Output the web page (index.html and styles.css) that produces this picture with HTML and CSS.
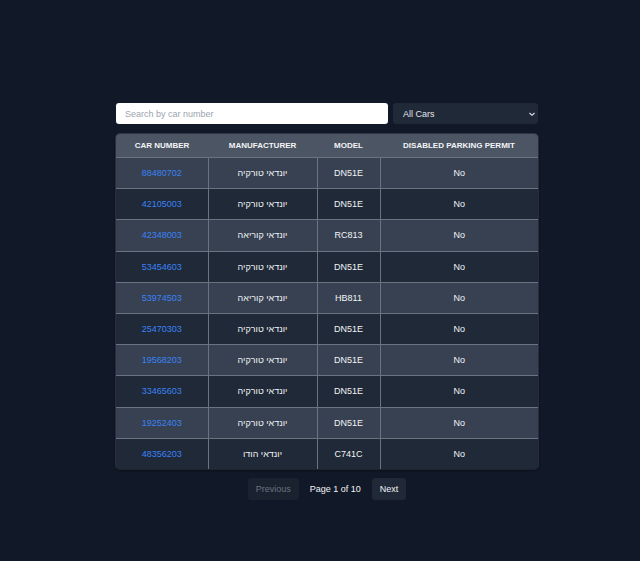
FILE: index.html
```html
<!DOCTYPE html>
<html>
<head>
<meta charset="utf-8">
<link rel="stylesheet" href="styles.css">
</head>
<body>
<div class="page">
  <div class="wrap">
    <div class="controls">
      <input class="search" type="text" placeholder="Search by car number">
      <div class="select"><span>All Cars</span><svg width="8" height="8" viewBox="0 0 8 8"><path d="M1.5 3 L4 5.3 L6.5 3" fill="none" stroke="#e5e7eb" stroke-width="1.1"/></svg></div>
    </div>
    <div class="table-box">
      <table>
        <thead>
          <tr><th class="c1">Car Number</th><th class="c2">Manufacturer</th><th class="c3">Model</th><th class="c4">Disabled Parking Permit</th></tr>
        </thead>
        <tbody>
          <tr><td class="num">88480702</td><td dir="rtl">יונדאי טורקיה</td><td>DN51E</td><td>No</td></tr>
          <tr><td class="num">42105003</td><td dir="rtl">יונדאי טורקיה</td><td>DN51E</td><td>No</td></tr>
          <tr><td class="num">42348003</td><td dir="rtl">יונדאי קוריאה</td><td>RC813</td><td>No</td></tr>
          <tr><td class="num">53454603</td><td dir="rtl">יונדאי טורקיה</td><td>DN51E</td><td>No</td></tr>
          <tr><td class="num">53974503</td><td dir="rtl">יונדאי קוריאה</td><td>HB811</td><td>No</td></tr>
          <tr><td class="num">25470303</td><td dir="rtl">יונדאי טורקיה</td><td>DN51E</td><td>No</td></tr>
          <tr><td class="num">19568203</td><td dir="rtl">יונדאי טורקיה</td><td>DN51E</td><td>No</td></tr>
          <tr><td class="num">33465603</td><td dir="rtl">יונדאי טורקיה</td><td>DN51E</td><td>No</td></tr>
          <tr><td class="num">19252403</td><td dir="rtl">יונדאי טורקיה</td><td>DN51E</td><td>No</td></tr>
          <tr><td class="num">48356203</td><td dir="rtl">יונדאי הודו</td><td>C741C</td><td>No</td></tr>
        </tbody>
      </table>
    </div>
    <div class="pager">
      <button class="btn disabled">Previous</button>
      <span class="info">Page 1 of 10</span>
      <button class="btn">Next</button>
    </div>
  </div>
</div>
</body>
</html>
```
FILE: styles.css
```css
html, body {
  margin: 0;
  padding: 0;
  background: #111827;
  font-family: "Liberation Sans", Arial, sans-serif;
}
.page {
  width: 640px;
  height: 561px;
  display: flex;
  justify-content: center;
  padding-top: 103px;
  padding-left: 14px;
  box-sizing: border-box;
}
.wrap {
  width: 422px;
  display: flex;
  flex-direction: column;
}
.controls {
  display: flex;
  gap: 5px;
  height: 21px;
}
.search {
  width: 272px;
  box-sizing: border-box;
  height: 21px;
  border: none;
  border-radius: 3px;
  background: #ffffff;
  padding: 0 9px;
  font-family: "Liberation Sans", Arial, sans-serif;
  font-size: 9px;
  color: #111827;
  outline: none;
}
.search::placeholder { color: #9ca3af; }
.select {
  flex: 1;
  background: #1f2937;
  border-radius: 3px;
  display: flex;
  align-items: center;
  justify-content: space-between;
  padding: 0 2px 0 10px;
  color: #e5e7eb;
  font-size: 9px;
}
.select svg { display: block; }
.table-box {
  margin-top: 10px;
  border-radius: 4px;
  overflow: hidden;
  box-shadow: 0 1px 3px rgba(0,0,0,0.6), 0 0 0 1px rgba(156,163,175,0.25);
}
table {
  width: 100%;
  border-collapse: collapse;
  table-layout: fixed;
}
th {
  background: #4b5563;
  color: #f3f4f6;
  font-size: 8px;
  font-weight: bold;
  text-transform: uppercase;
  height: 23px;
  padding: 0;
  border-bottom: 1px solid #6b7280;
}
.c1 { width: 92px; }
.c2 { width: 109px; }
.c3 { width: 63px; }
td {
  height: 30.2px;
  padding: 0;
  text-align: center;
  font-size: 9px;
  color: #f3f4f6;
  border: 1px solid #6b7280;
}
td:first-child { border-left: none; }
td:last-child { border-right: none; }
tbody tr:last-child td { border-bottom: none; }
tbody tr:nth-child(odd) td { background: #374151; }
tbody tr:nth-child(even) td { background: #1f2937; }
td.num { color: #3b82f6; }
.pager {
  display: flex;
  justify-content: center;
  align-items: center;
  gap: 11px;
  margin-top: 9px;
}
.btn {
  height: 22px;
  border: none;
  border-radius: 3px;
  background: #1f2937;
  color: #f3f4f6;
  font-family: "Liberation Sans", Arial, sans-serif;
  font-size: 9px;
  padding: 0 8px;
}
.btn.disabled { color: #6b7280; background: #1a2230; }
.info { color: #f3f4f6; font-size: 9px; }
```
